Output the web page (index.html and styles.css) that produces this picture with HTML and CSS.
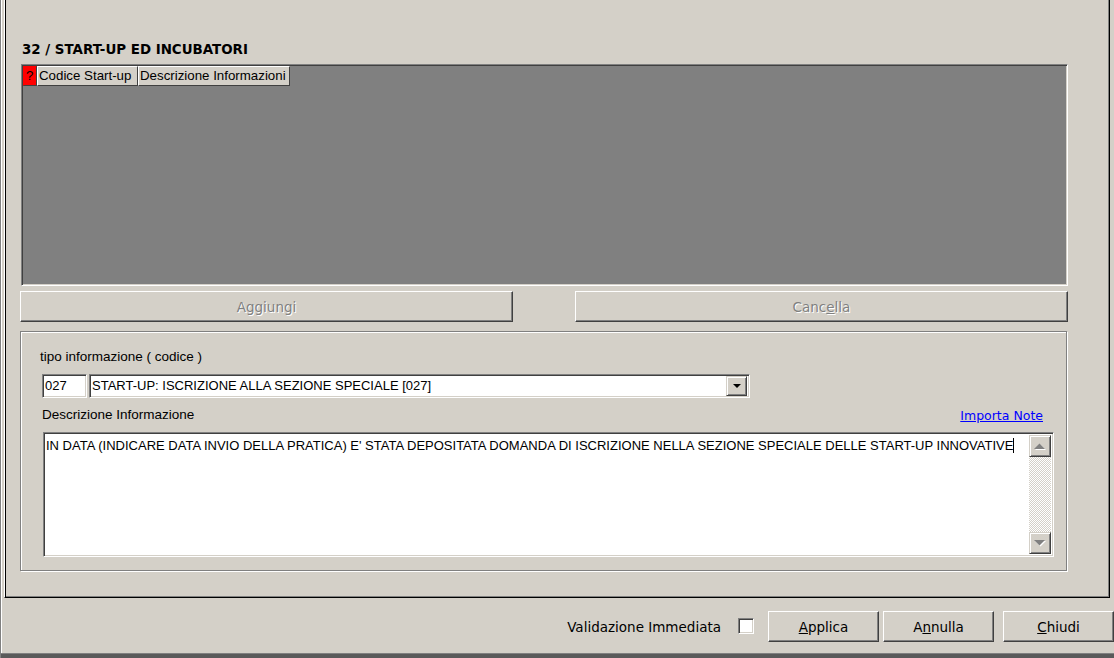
FILE: index.html
```html
<!DOCTYPE html>
<html lang="it">
<head>
<meta charset="utf-8">
<title>Start-up ed incubatori</title>
<link rel="stylesheet" href="styles.css">
</head>
<body>
<div class="window">
  <div class="panel">
    <div class="title">32 / START-UP ED INCUBATORI</div>
    <div class="grid">
      <div class="grid-header">
        <div class="hcell hcell-flag">?</div>
        <div class="hcell hcell-code">Codice Start-up</div>
        <div class="hcell hcell-desc">Descrizione Informazioni</div>
      </div>
    </div>
    <div class="actions">
      <div class="btn btn-wide btn-disabled">Aggiungi</div>
      <div class="btn btn-wide btn-disabled">Canc<u>e</u>lla</div>
    </div>
    <div class="group">
      <div class="label label-tipo">tipo informazione ( codice )</div>
      <div class="combo-row">
        <div class="field field-code">027</div>
        <div class="field combo">
          <span class="combo-text">START-UP: ISCRIZIONE ALLA SEZIONE SPECIALE [027]</span>
          <span class="combo-btn">
            <svg width="8" height="4" viewBox="0 0 8 4"><path d="M0 0h8L4 4z" fill="#000"/></svg>
          </span>
        </div>
      </div>
      <div class="desc-row">
        <div class="label">Descrizione Informazione</div>
        <a class="link" href="#">Importa Note</a>
      </div>
      <div class="memo">
        <div class="memo-text">IN DATA (INDICARE DATA INVIO DELLA PRATICA) E' STATA DEPOSITATA DOMANDA DI ISCRIZIONE NELLA SEZIONE SPECIALE DELLE START-UP INNOVATIVE<span class="caret"></span></div>
        <div class="vscroll">
          <div class="sbtn">
            <svg width="12" height="7" viewBox="0 0 12 7"><path d="M1 7h11L6.5 1.5z" fill="#fff"/><path d="M0 6h11L5.5 0.5z" fill="#808080"/></svg>
          </div>
          <div class="track"></div>
          <div class="sbtn">
            <svg width="12" height="7" viewBox="0 0 12 7"><path d="M1 1h11L6.5 6.5z" fill="#fff"/><path d="M0 0h11L5.5 5.5z" fill="#808080"/></svg>
          </div>
        </div>
      </div>
    </div>
  </div>
  <div class="footer">
    <span class="footer-label">Validazione Immediata</span>
    <span class="checkbox"></span>
    <div class="btn btn-footer btn-applica"><u>A</u>pplica</div>
    <div class="btn btn-footer btn-annulla">A<u>n</u>nulla</div>
    <div class="btn btn-footer btn-chiudi"><u>C</u>hiudi</div>
  </div>
  <div class="band"></div>
</div>
</body>
</html>
```

FILE: styles.css
```css
* { box-sizing: border-box; }

html, body {
  margin: 0;
  padding: 0;
  background: #d4d0c8;
}

body {
  font-family: "Liberation Sans", Arial, sans-serif;
  font-size: 13.5px;
  color: #000;
}

.window {
  width: 1114px;
  height: 658px;
  display: flex;
  flex-direction: column;
  border-left: 1px solid #808080;
  box-shadow: inset 1px 0 #ffffff;
  overflow: hidden;
}

.panel {
  margin-left: 3px;
  width: 1106px;
  height: 598px;
  flex: none;
  border-left: 1px solid #ffffff;
  border-right: 1px solid #000000;
  border-bottom: 1px solid #000000;
  box-shadow: inset 1px 0 #000000, inset -1px 0 #808080, inset 0 -1px #808080;
  padding: 42px 0 0 15px;
  display: flex;
  flex-direction: column;
}

.title {
  margin-left: 2px;
  height: 16px;
  line-height: 16px;
  font-family: "DejaVu Sans", Verdana, sans-serif;
  font-weight: bold;
  font-size: 13.4px;
}

.grid {
  margin: 6px 0 0 1px;
  width: 1047px;
  height: 222px;
  background: #808080;
  border: 1px solid;
  border-color: #808080 #ffffff #ffffff #808080;
  box-shadow: inset 1px 1px #404040, inset -1px -1px #d4d0c8;
  padding: 1px;
}

.grid-header {
  display: flex;
  height: 20px;
}

.hcell {
  height: 20px;
  line-height: 18px;
  background: #d4d0c8;
  border: 1px solid;
  border-color: #ffffff #404040 #404040 #ffffff;
  padding-left: 1px;
  white-space: nowrap;
  overflow: hidden;
  font-size: 13.3px;
}

.hcell-flag {
  width: 14px;
  background: #ff0000;
  border-color: #ff0000 #404040 #404040 #ff0000;
  padding-left: 2px;
}

.hcell-code { width: 101px; }
.hcell-desc { width: 152px; }

.actions {
  margin-top: 5px;
  width: 1048px;
  display: flex;
  justify-content: space-between;
}

.btn {
  display: flex;
  align-items: center;
  justify-content: center;
  border: 1px solid;
  border-color: #ffffff #404040 #404040 #ffffff;
  box-shadow: inset -1px -1px #808080;
  background: #d4d0c8;
  font-family: "DejaVu Sans", Verdana, sans-serif;
  font-size: 13.5px;
  white-space: nowrap;
}

.btn-wide {
  width: 493px;
  height: 31px;
}

.btn-disabled {
  color: #808080;
  text-shadow: 1px 1px 0 #ffffff;
}

.group {
  margin-top: 9px;
  width: 1047px;
  height: 240px;
  border: 1px solid #808080;
  box-shadow: inset 1px 1px #ffffff, 1px 1px #ffffff;
  padding: 18px 0 0 21px;
  display: flex;
  flex-direction: column;
}

.label {
  height: 14px;
  line-height: 14px;
  white-space: nowrap;
}

.label-tipo { margin-left: -2px; }

.combo-row {
  margin-top: 10px;
  display: flex;
  gap: 2px;
}

.field {
  height: 24px;
  background: #ffffff;
  border: 1px solid;
  border-color: #808080 #ffffff #ffffff #808080;
  box-shadow: inset 1px 1px #404040, inset -1px -1px #d4d0c8;
  line-height: 22px;
  padding-left: 2px;
  white-space: nowrap;
  font-size: 13px;
}

.field-code { width: 45px; }

.combo {
  width: 661px;
  display: flex;
  justify-content: space-between;
  padding-right: 2px;
}

.combo-btn {
  margin-top: 1px;
  width: 21px;
  height: 20px;
  background: #d4d0c8;
  border: 1px solid;
  border-color: #d4d0c8 #404040 #404040 #d4d0c8;
  box-shadow: inset 1px 1px #ffffff, inset -1px -1px #808080;
  display: flex;
  align-items: center;
  justify-content: center;
}

.desc-row {
  margin-top: 10px;
  width: 1001px;
  display: flex;
  justify-content: space-between;
  align-items: center;
  height: 14px;
}

.link {
  color: #0000ff;
  text-decoration: underline;
  font-family: "DejaVu Sans", Verdana, sans-serif;
  font-size: 12.5px;
}

.memo {
  margin-top: 10px;
  margin-left: 1px;
  width: 1011px;
  height: 125px;
  background: #ffffff;
  border: 1px solid;
  border-color: #808080 #ffffff #ffffff #808080;
  box-shadow: inset 1px 1px #404040, inset -1px -1px #d4d0c8;
  padding: 2px;
  display: flex;
}

.memo-text {
  flex: 1;
  padding-top: 3px;
  line-height: 14px;
  white-space: nowrap;
  font-size: 13px;
}

.caret {
  display: inline-block;
  width: 1px;
  height: 15px;
  background: #000;
  vertical-align: -3px;
}

.vscroll {
  width: 22px;
  display: flex;
  flex-direction: column;
}

.sbtn {
  height: 22px;
  background: #d4d0c8;
  border: 1px solid;
  border-color: #d4d0c8 #404040 #404040 #d4d0c8;
  box-shadow: inset 1px 1px #ffffff, inset -1px -1px #808080;
  display: flex;
  align-items: center;
  justify-content: center;
}

.track {
  flex: 1;
  background-color: #ffffff;
  background-image:
    linear-gradient(45deg, #d4d0c8 25%, transparent 25%, transparent 75%, #d4d0c8 75%),
    linear-gradient(45deg, #d4d0c8 25%, transparent 25%, transparent 75%, #d4d0c8 75%);
  background-size: 2px 2px;
  background-position: 0 0, 1px 1px;
}

.footer {
  height: 55px;
  flex: none;
  display: flex;
  align-items: center;
  justify-content: flex-end;
  padding: 1px 0 0 0;
  font-family: "DejaVu Sans", Verdana, sans-serif;
  font-size: 13.5px;
}

.footer-label { margin-right: 17px; padding-top: 2px; }

.checkbox {
  width: 16px;
  height: 16px;
  background: #ffffff;
  border: 1px solid;
  border-color: #808080 #ffffff #ffffff #808080;
  box-shadow: inset 1px 1px #404040, inset -1px -1px #d4d0c8;
  margin-right: 14px;
}

.btn-footer {
  width: 111px;
  height: 31px;
  padding-top: 2px;
}

.btn-applica { margin-right: 4px; }
.btn-annulla { margin-right: 9px; }

.band {
  flex: 1;
  border-top: 1px solid #808080;
  background: #5a5a5a;
}
```
